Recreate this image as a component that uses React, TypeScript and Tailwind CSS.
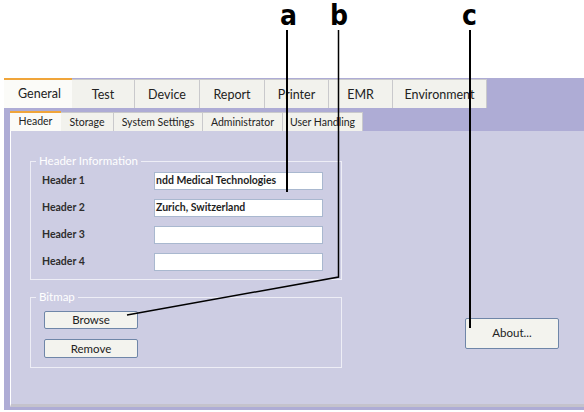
import React from 'react';

const mainTabs = [
  { label: 'General', w: 68 },
  { label: 'Test', w: 63 },
  { label: 'Device', w: 65 },
  { label: 'Report', w: 65 },
  { label: 'Printer', w: 64 },
  { label: 'EMR', w: 64 },
  { label: 'Environment', w: 94 },
];

const subTabs = [
  { label: 'Header', w: 51 },
  { label: 'Storage', w: 53 },
  { label: 'System Settings', w: 89 },
  { label: 'Administrator', w: 80 },
  { label: 'User Handling', w: 80 },
];

const headers = [
  { label: 'Header 1', value: 'ndd Medical Technologies' },
  { label: 'Header 2', value: 'Zurich, Switzerland' },
  { label: 'Header 3', value: '' },
  { label: 'Header 4', value: '' },
];

function WinButton({ label, className }: { label: string; className: string }) {
  return (
    <button
      className={`flex items-center justify-center rounded-[2px] border border-[#6f86a8] bg-[#f3f3ee] text-[11.5px] text-[#222] ${className}`}
    >
      {label}
    </button>
  );
}

export default function App() {
  return (
    <div
      className="relative h-[412px] w-[584px] overflow-hidden bg-white"
      style={{ fontFamily: 'Lato, "Open Sans", sans-serif' }}
    >
      <div className="ml-[4px] mt-[78px] flex h-[332px] w-[580px] flex-col bg-[#aeacd5] pb-[3px]">
        {/* main tabs */}
        <div className="flex h-[30px] shrink-0 items-end">
          {mainTabs.map((t, i) =>
            i === 0 ? (
              <div
                key={t.label}
                className="flex h-[30px] items-center border-t-2 border-[#f0a53a] bg-[#fbfbf8] pl-[14px] text-[12.5px] text-[#222]"
                style={{ width: t.w }}
              >
                {t.label}
              </div>
            ) : (
              <div
                key={t.label}
                className="flex h-[29px] items-center justify-center border-r border-t border-[#c9c9cc] bg-[#f2f2ed] pt-[3px] text-[12.5px] text-[#222]"
                style={{ width: t.w }}
              >
                {t.label}
              </div>
            ),
          )}
        </div>

        {/* sub tabs */}
        <div className="mt-[3px] flex h-[20px] shrink-0 items-end pl-[6px]">
          {subTabs.map((t, i) =>
            i === 0 ? (
              <div
                key={t.label}
                className="flex h-[20px] items-center justify-center border-t-2 border-[#f0a53a] bg-[#fbfbf8] text-[10.5px] text-[#222]"
                style={{ width: t.w }}
              >
                {t.label}
              </div>
            ) : (
              <div
                key={t.label}
                className="flex h-[19px] items-center justify-center border-r border-t border-[#c9c9cc] bg-[#f2f2ed] pt-[2px] text-[10.5px] text-[#222]"
                style={{ width: t.w }}
              >
                {t.label}
              </div>
            ),
          )}
        </div>

        {/* panel */}
        <div className="ml-[6px] flex-1 border-b-[3px] border-l border-b-[#c4c2cc] border-l-white bg-[#cdcde3] pl-[19px] pt-[23px]">
          <fieldset className="w-[312px] border border-[#eeeef6] px-[11px] pb-[8px]">
            <legend className="-ml-[6px] px-[3px] text-[11.5px] leading-[14px] text-white">Header Information</legend>
            <div className="mt-[4px] flex flex-col gap-[9px]">
              {headers.map((h) => (
                <div key={h.label} className="flex h-[18px] items-center">
                  <span className="w-[112px] text-[10.5px] font-bold text-[#2d2d2d]">{h.label}</span>
                  <div className="flex h-[18px] w-[169px] items-center border border-[#a9b8cf] bg-white px-[1px] text-[10.5px] font-bold text-[#1e1e1e]">
                    {h.value}
                  </div>
                </div>
              ))}
            </div>
          </fieldset>

          <div className="mt-[10px] flex items-center">
            <fieldset className="w-[312px] border border-[#eeeef6] px-[13px] pb-[9px]">
              <legend className="-ml-[8px] px-[3px] text-[11.5px] leading-[14px] text-white">Bitmap</legend>
              <div className="mt-[7px] flex flex-col gap-[10px]">
                <WinButton label="Browse" className="h-[18px] w-[94px]" />
                <WinButton label="Remove" className="h-[19px] w-[94px]" />
              </div>
            </fieldset>
            <WinButton label="About..." className="ml-[123px] mt-[8px] h-[31px] w-[94px]" />
          </div>
        </div>
      </div>

      {/* callout letters */}
      <div
        className="absolute left-[280px] top-[1px] text-[28px] font-bold leading-[30px] text-black"
        style={{ fontFamily: '"DejaVu Sans Condensed", "DejaVu Sans", sans-serif' }}
      >
        a
      </div>
      <div
        className="absolute left-[330px] top-[1px] text-[28px] font-bold leading-[30px] text-black"
        style={{ fontFamily: '"DejaVu Sans Condensed", "DejaVu Sans", sans-serif' }}
      >
        b
      </div>
      <div
        className="absolute left-[462px] top-[1px] text-[28px] font-bold leading-[30px] text-black"
        style={{ fontFamily: '"DejaVu Sans Condensed", "DejaVu Sans", sans-serif' }}
      >
        c
      </div>

      {/* callout lines */}
      <svg className="pointer-events-none absolute left-0 top-0" width="584" height="412" viewBox="0 0 584 412">
        <line x1="287" y1="30" x2="287" y2="192" stroke="#000" strokeWidth="2" />
        <polyline points="338.5,30 338.5,277 127,315" fill="none" stroke="#000" strokeWidth="1.5" />
        <line x1="470" y1="30" x2="470" y2="328" stroke="#000" strokeWidth="2" />
      </svg>
    </div>
  );
}
